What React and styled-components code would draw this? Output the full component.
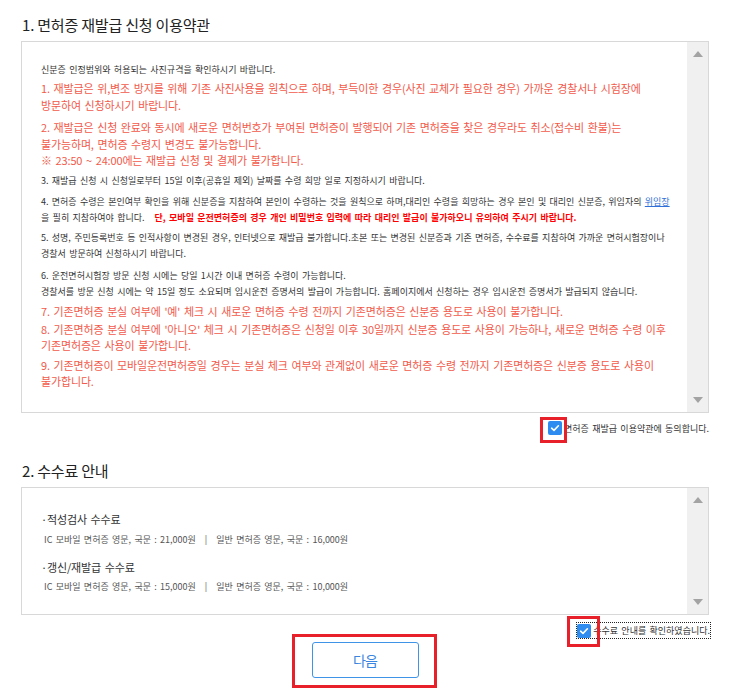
import React from "react";
import styled, { createGlobalStyle, css } from "styled-components";

const GlobalStyle = createGlobalStyle`
  html, body { margin: 0; padding: 0; background: #fff; }
  body { font-family: "Noto Sans CJK KR", "Noto Sans", sans-serif; }
  * { box-sizing: border-box; }
`;

const Page = styled.div`
  width: 709px;
  padding: 15px 0 22px 21px;
`;

const SectionTitle = styled.h2`
  margin: ${(p) => p.$mt || 0}px 0 6px 1px;
  font-size: 15px;
  line-height: 20px;
  font-weight: 400;
  color: #222;
  letter-spacing: -0.2px;
`;

const ScrollBox = styled.div`
  display: flex;
  height: ${(p) => p.$h}px;
  border: 1px solid #d8d8d8;
  background: #fff;
`;

const BoxContent = styled.div`
  flex: 1;
  padding: ${(p) => p.$pt}px 0 0 19px;
  overflow: hidden;
`;

const Scrollbar = styled.div`
  width: 21px;
  background: #f0f0f0;
  display: flex;
  flex-direction: column;
  justify-content: space-between;
  align-items: center;
  padding: 9px 0 9px;
`;

const Arrow = styled.span`
  width: 0;
  height: 0;
  border-left: 5px solid transparent;
  border-right: 5px solid transparent;
  ${(p) =>
    p.$dir === "up"
      ? css`border-bottom: 6px solid #a3a3a3;`
      : css`border-top: 6px solid #a3a3a3;`}
`;

const smallText = css`
  font-size: 9px;
  letter-spacing: 0px;
  word-spacing: 1.3px;
`;

const largeText = css`
  font-size: 11px;
  letter-spacing: -0.15px;
  word-spacing: 1.4px;
`;

const Para = styled.p`
  margin: ${(p) => p.$mt || 0}px 0 0;
  white-space: nowrap;
  ${(p) =>
    p.$tone === "red"
      ? css`
          ${largeText};
          line-height: 16.5px;
          color: #f25a4b;
        `
      : css`
          ${smallText};
          line-height: 16px;
          color: #333;
        `}
`;

const Warn = styled.strong`
  color: #ff0000;
  font-weight: 700;
  margin-left: 10px;
`;

const DocLink = styled.a`
  color: #2f6fd8;
  text-decoration: underline;
`;

const FeeHeading = styled.p`
  margin: ${(p) => p.$mt || 0}px 0 0;
  ${largeText};
  line-height: 18px;
  color: #333;
  white-space: nowrap;
`;

const FeeLine = styled.p`
  margin: ${(p) => p.$mt || 0}px 0 0;
  padding-left: 3px;
  ${smallText};
  line-height: 16px;
  color: #555;
  white-space: nowrap;
`;

const Sep = styled.span`
  margin: 0 9px;
`;

const CheckRow = styled.div`
  display: flex;
  justify-content: flex-end;
  margin-top: ${(p) => p.$mt}px;
  margin-right: ${(p) => p.$mr || 0}px;
`;

const CheckLabel = styled.label`
  display: flex;
  align-items: center;
  gap: 2px;
  height: ${(p) => p.$h || 16}px;
  ${smallText};
  color: #333;
  white-space: nowrap;
  ${(p) =>
    p.$focused &&
    css`
      outline: 1px dotted #222;
    `}
`;

const BoxWrap = styled.span`
  position: relative;
  display: inline-flex;
`;

const CheckBox = styled.span`
  width: 14px;
  height: 14px;
  border-radius: 2px;
  background: #2e8cf0;
  display: inline-flex;
  align-items: center;
  justify-content: center;
`;

const Highlight = styled.span`
  position: absolute;
  left: ${(p) => p.$l}px;
  top: ${(p) => p.$t}px;
  width: ${(p) => p.$w}px;
  height: ${(p) => p.$hh}px;
  border: 3px solid #e8202a;
  pointer-events: none;
  z-index: 2;
`;

const ButtonArea = styled.div`
  display: flex;
  justify-content: center;
  margin-top: 4px;
`;

const NextButton = styled.button`
  width: 107px;
  height: 36px;
  border: 1px solid #3f94e8;
  border-radius: 3px;
  background: #fff;
  color: #3a85e0;
  font-family: "Noto Sans CJK KR", sans-serif;
  font-size: 14px;
  letter-spacing: -0.8px;
  padding: 0;
`;

const Check = () => (
  <svg width="10" height="10" viewBox="0 0 10 10">
    <path d="M1.6 5.2 L4 7.4 L8.4 2.8" fill="none" stroke="#fff" strokeWidth="1.6" strokeLinecap="round" strokeLinejoin="round" />
  </svg>
);

export default function App() {
  return (
    <>
      <GlobalStyle />
      <Page>
        <SectionTitle>1. 면허증 재발급 신청 이용약관</SectionTitle>
        <ScrollBox $h={372}>
          <BoxContent $pt={20}>
            <Para>신분증 인정범위와 허용되는 사진규격을 확인하시기 바랍니다.</Para>
            <Para $tone="red" $mt={2}>
              1. 재발급은 위,변조 방지를 위해 기존 사진사용을 원칙으로 하며, 부득이한 경우(사진 교체가 필요한 경우) 가까운 경찰서나 시험장에
              <br />
              방문하여 신청하시기 바랍니다.
            </Para>
            <Para $tone="red" $mt={6}>
              2. 재발급은 신청 완료와 동시에 새로운 면허번호가 부여된 면허증이 발행되어 기존 면허증을 찾은 경우라도 취소(접수비 환불)는
              <br />
              불가능하며, 면허증 수령지 변경도 불가능합니다.
              <br />※ 23:50 ~ 24:00에는 재발급 신청 및 결제가 불가합니다.
            </Para>
            <Para $mt={4}>3. 재발급 신청 시 신청일로부터 15일 이후(공휴일 제외) 날짜를 수령 희망 일로 지정하시기 바랍니다.</Para>
            <Para $mt={5}>
              4. 면허증 수령은 본인여부 확인을 위해 신분증을 지참하여 본인이 수령하는 것을 원칙으로 하며,대리인 수령을 희망하는 경우 본인 및 대리인 신분증, 위임자의{" "}
              <DocLink href="#">위임장</DocLink>
              <br />을 필히 지참하여야 합니다.
              <Warn>단, 모바일 운전면허증의 경우 개인 비밀번호 입력에 따라 대리인 발급이 불가하오니 유의하여 주시기 바랍니다.</Warn>
            </Para>
            <Para $mt={4}>
              5. 성명, 주민등록번호 등 인적사항이 변경된 경우, 인터넷으로 재발급 불가합니다.초본 또는 변경된 신분증과 기존 면허증, 수수료를 지참하여 가까운 면허시험장이나
              <br />
              경찰서 방문하여 신청하시기 바랍니다.
            </Para>
            <Para $mt={6}>
              6. 운전면허시험장 방문 신청 시에는 당일 1시간 이내 면허증 수령이 가능합니다.
              <br />
              경찰서를 방문 신청 시에는 약 15일 정도 소요되며 임시운전 증명서의 발급이 가능합니다. 홈페이지에서 신청하는 경우 임시운전 증명서가 발급되지 않습니다.
            </Para>
            <Para $tone="red" $mt={3}>
              7. 기존면허증 분실 여부에 '예' 체크 시 새로운 면허증 수령 전까지 기존면허증은 신분증 용도로 사용이 불가합니다.
            </Para>
            <Para $tone="red" $mt={1.5}>
              8. 기존면허증 분실 여부에 '아니오' 체크 시 기존면허증은 신청일 이후 30일까지 신분증 용도로 사용이 가능하나, 새로운 면허증 수령 이후
              <br />
              기존면허증은 사용이 불가합니다.
            </Para>
            <Para $tone="red" $mt={3}>
              9. 기존면허증이 모바일운전면허증일 경우는 분실 체크 여부와 관계없이 새로운 면허증 수령 전까지 기존면허증은 신분증 용도로 사용이
              <br />
              불가합니다.
            </Para>
          </BoxContent>
          <Scrollbar>
            <Arrow $dir="up" />
            <Arrow $dir="down" />
          </Scrollbar>
        </ScrollBox>

        <CheckRow $mt={7}>
          <CheckLabel>
            <BoxWrap>
              <CheckBox>
                <Check />
              </CheckBox>
              <Highlight $l={-8} $t={-4} $w={27} $hh={26} />
            </BoxWrap>
            면허증 재발급 이용약관에 동의합니다.
          </CheckLabel>
        </CheckRow>

        <SectionTitle $mt={25}>2. 수수료 안내</SectionTitle>
        <ScrollBox $h={128}>
          <BoxContent $pt={22}>
            <FeeHeading>·적성검사 수수료</FeeHeading>
            <FeeLine $mt={4}>
              IC 모바일 면허증 영문, 국문 : 21,000원<Sep>|</Sep>일반 면허증 영문, 국문 : 16,000원
            </FeeLine>
            <FeeHeading $mt={10}>·갱신/재발급 수수료</FeeHeading>
            <FeeLine $mt={3}>
              IC 모바일 면허증 영문, 국문 : 15,000원<Sep>|</Sep>일반 면허증 영문, 국문 : 10,000원
            </FeeLine>
          </BoxContent>
          <Scrollbar>
            <Arrow $dir="up" />
            <Arrow $dir="down" />
          </Scrollbar>
        </ScrollBox>

        <CheckRow $mt={8} $mr={-1}>
          <CheckLabel $focused $h={15}>
            <BoxWrap>
              <CheckBox>
                <Check />
              </CheckBox>
              <Highlight $l={-10} $t={-8} $w={33} $hh={31} />
            </BoxWrap>
            수수료 안내를 확인하였습니다.
          </CheckLabel>
        </CheckRow>

        <ButtonArea>
          <BoxWrap>
            <NextButton type="button">다음</NextButton>
            <Highlight $l={-20} $t={-8} $w={145} $hh={54} />
          </BoxWrap>
        </ButtonArea>
      </Page>
    </>
  );
}
